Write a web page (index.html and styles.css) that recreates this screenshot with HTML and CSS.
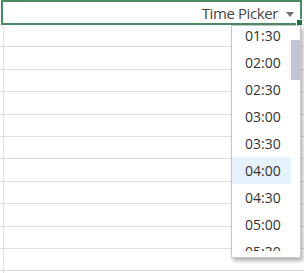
FILE: index.html
```html
<!DOCTYPE html>
<html>
<head>
<meta charset="utf-8">
<link rel="stylesheet" href="styles.css">
</head>
<body>
<div class="sheet">
  <div class="gutter"></div>
  <div class="rows">
    <div class="row"></div><div class="row"></div><div class="row"></div><div class="row"></div>
    <div class="row"></div><div class="row"></div><div class="row"></div><div class="row"></div>
    <div class="row"></div><div class="row"></div><div class="row"></div><div class="row"></div>
  </div>
</div>
<div class="cell">
  <span class="label">Time Picker</span>
  <span class="arrow"></span>
  <span class="handle"></span>
</div>
<div class="dropdown">
  <div class="viewport">
    <ul class="list">
      <li class="item">01:30</li>
      <li class="item">02:00</li>
      <li class="item">02:30</li>
      <li class="item">03:00</li>
      <li class="item">03:30</li>
      <li class="item hover">04:00</li>
      <li class="item">04:30</li>
      <li class="item">05:00</li>
      <li class="item">05:30</li>
    </ul>
    <div class="scrollbar"><div class="thumb"></div></div>
  </div>
</div>
</body>
</html>
```
FILE: styles.css
```css
html, body {
  margin: 0;
  padding: 0;
  background: #fff;
  width: 304px;
  height: 273px;
  overflow: hidden;
  font-family: "Open Sans", "Noto Sans", sans-serif;
}
.sheet {
  display: flex;
  height: 273px;
  overflow: hidden;
}
.gutter {
  width: 3px;
  flex: none;
  margin-top: 25px;
  border-right: 1px solid #e2e2e2;
  height: 248px;
}
.rows {
  flex: 1;
  margin-left: -4px;
  display: flex;
  flex-direction: column;
}
.row {
  height: 22.4px;
  flex: none;
  box-sizing: border-box;
  border-bottom: 1.4px solid #dedede;
}
.row:first-child {
  height: 25px;
}
.cell {
  position: absolute;
  left: 1px;
  top: 0;
  width: 301px;
  height: 25px;
  box-sizing: border-box;
  border: 2px solid #4b8b63;
  background: #fff;
  display: flex;
  align-items: center;
  justify-content: flex-end;
  padding-right: 6px;
  gap: 8px;
}
.label {
  font-size: 15px;
  color: #444;
  letter-spacing: -0.4px;
  line-height: 20px;
}
.arrow {
  width: 0;
  height: 0;
  border-left: 4px solid transparent;
  border-right: 4px solid transparent;
  border-top: 5px solid #707070;
  margin-top: 3px;
}
.handle {
  position: absolute;
  right: -3px;
  bottom: -3px;
  width: 5px;
  height: 5px;
  background: #217346;
  border: 1px solid #fff;
}
.dropdown {
  position: absolute;
  left: 231px;
  top: 25px;
  width: 70px;
  height: 233px;
  box-sizing: border-box;
  background: #fff;
  border: 1px solid #c8c8c8;
  box-shadow: 2px 3px 4px rgba(0,0,0,0.3);
  padding-bottom: 6px;
  display: flex;
  flex-direction: column;
}
.viewport {
  flex: 1;
  overflow: hidden;
  display: flex;
}
.list {
  list-style: none;
  margin: -4px 0 0 0;
  padding: 0;
  flex: 1;
}
.item {
  height: 27px;
  line-height: 27px;
  padding-left: 13px;
  font-size: 14px;
  color: #333;
}
.item.hover {
  background: #e5f1fb;
}
.scrollbar {
  width: 9px;
  flex: none;
  background: #fff;
}
.thumb {
  margin-top: 14px;
  height: 40px;
  background: #c2c3d6;
}
```
